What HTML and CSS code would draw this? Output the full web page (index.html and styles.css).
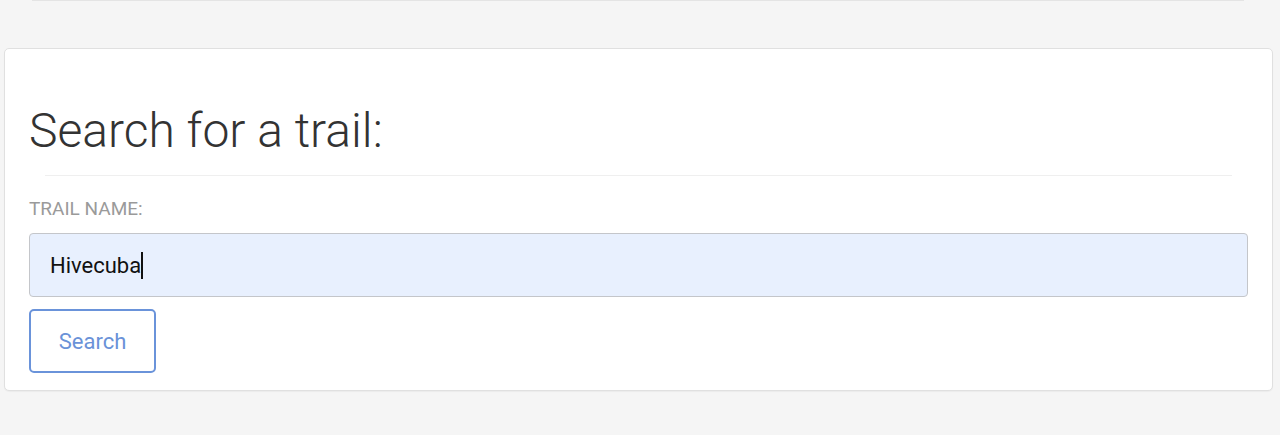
FILE: index.html
```html
<!DOCTYPE html>
<html lang="en">
<head>
<meta charset="utf-8">
<title>Search for a trail</title>
<link rel="stylesheet" href="styles.css">
</head>
<body>
  <div class="prev-card"></div>
  <main class="card">
    <h1 class="title">Search for a trail:</h1>
    <hr class="divider">
    <form class="search-form">
      <label class="field-label" for="trail">TRAIL NAME:</label>
      <div class="input-box">
        <span class="input-value">Hivecuba</span><span class="caret"></span>
      </div>
      <button type="button" class="btn-search">Search</button>
    </form>
  </main>
</body>
</html>
```
FILE: styles.css
```css
* { box-sizing: border-box; }
html, body { margin: 0; padding: 0; }
body {
  background: #f5f5f5;
  font-family: Roboto, "Liberation Sans", sans-serif;
  width: 1280px;
  height: 435px;
  overflow: hidden;
}
.prev-card {
  height: 1px;
  margin: 0 36px 0 32px;
  background: #e4e4e4;
}
.card {
  margin: 47px 7px 0 4px;
  background: #fff;
  border: 1px solid #e0e0e0;
  border-radius: 5px;
  padding: 53px 24px 17px 24px;
  box-shadow: 0 1px 1px rgba(0,0,0,0.04);
}
.title {
  margin: 0;
  font-size: 48px;
  font-weight: 300;
  color: #333;
  line-height: 58px;
}
.divider {
  border: 0;
  height: 1px;
  background: #efefef;
  margin: 15px 16px 22px 16px;
}
.search-form {
  display: flex;
  flex-direction: column;
  align-items: flex-start;
}
.field-label {
  font-size: 19px;
  color: #9a9a9a;
  line-height: 22px;
  margin-bottom: 13px;
}
.input-box {
  width: 100%;
  height: 64px;
  background: #e8f0fe;
  border: 1px solid #c4c6ca;
  border-radius: 4px;
  padding: 0 20px;
  display: flex;
  align-items: center;
  font-size: 22px;
  color: #111;
}
.caret {
  display: inline-block;
  width: 1.5px;
  height: 27px;
  background: #111;
}
.btn-search {
  margin-top: 12px;
  width: 127px;
  height: 64px;
  background: #fff;
  border: 2px solid #6a93da;
  border-radius: 5px;
  color: #6a92d8;
  font-family: Roboto, "Liberation Sans", sans-serif;
  font-size: 22px;
  padding: 0;
}
```
